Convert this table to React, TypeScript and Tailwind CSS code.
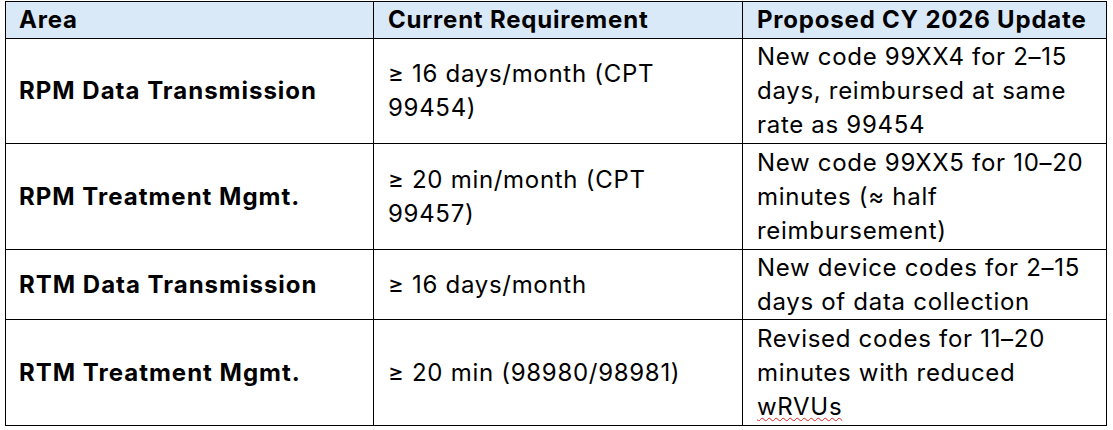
import React from "react";

const rows: { area: string; current: string[]; proposed: React.ReactNode[]; h: string }[] = [
  {
    area: "RPM Data Transmission",
    current: ["≥ 16 days/month (CPT", "99454)"],
    proposed: ["New code 99XX4 for 2–15", "days, reimbursed at same", "rate as 99454"],
    h: "h-[105px]",
  },
  {
    area: "RPM Treatment Mgmt.",
    current: ["≥ 20 min/month (CPT", "99457)"],
    proposed: ["New code 99XX5 for 10–20", "minutes (≈ half", "reimbursement)"],
    h: "h-[106px]",
  },
  {
    area: "RTM Data Transmission",
    current: ["≥ 16 days/month"],
    proposed: ["New device codes for 2–15", "days of data collection"],
    h: "h-[70px]",
  },
  {
    area: "RTM Treatment Mgmt.",
    current: ["≥ 20 min (98980/98981)"],
    proposed: [
      "Revised codes for 11–20",
      "minutes with reduced",
      <span className="underline decoration-wavy decoration-[#e02020] decoration-1 underline-offset-[2px]">wRVUs</span>,
    ],
    h: "h-[105px]",
  },
];

function Lines({ items }: { items: React.ReactNode[] }) {
  return (
    <div className="flex flex-col">
      {items.map((t, i) => (
        <div key={i} className="whitespace-nowrap">
          {t}
        </div>
      ))}
    </div>
  );
}

export default function App() {
  return (
    <div
      className="w-[1113px] h-[430px] bg-white pt-[1px] pl-[5px] text-black"
      style={{ fontFamily: "Inter, 'Noto Sans', sans-serif" }}
    >
      <div className="w-[1102px] border border-black text-[24px] leading-[34px] tracking-[0.7px]">
        <div className="grid grid-cols-[367px_369px_364px] h-[37px] bg-[#dae9f7] border-b border-black font-bold tracking-[0.8px]">
          <div className="flex items-center pl-[13px]">Area</div>
          <div className="flex items-center pl-[14px] border-l border-black">Current Requirement</div>
          <div className="flex items-center pl-[14px] border-l border-black">Proposed CY 2026 Update</div>
        </div>
        {rows.map((r, i) => (
          <div
            key={i}
            className={`grid grid-cols-[367px_369px_364px] ${r.h} ${i < rows.length - 1 ? "border-b border-black" : ""}`}
          >
            <div className="flex items-center pl-[13px] font-bold whitespace-nowrap tracking-[1px]">{r.area}</div>
            <div className="flex items-center pl-[14px] border-l border-black">
              <Lines items={r.current} />
            </div>
            <div className="flex items-center pl-[14px] border-l border-black">
              <Lines items={r.proposed} />
            </div>
          </div>
        ))}
      </div>
    </div>
  );
}
